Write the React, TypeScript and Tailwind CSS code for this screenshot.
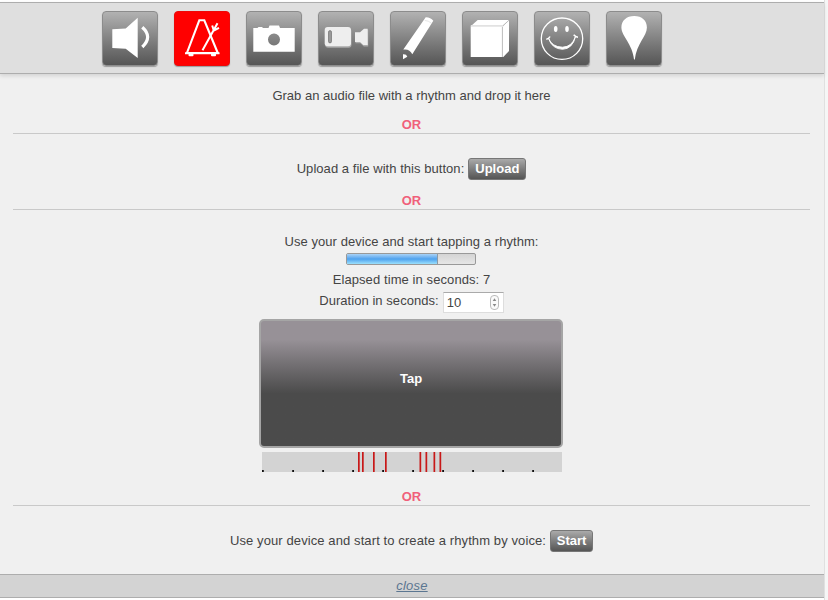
import type { ReactNode } from "react";

const TAPS = [96, 100, 111, 123, 157.5, 163.5, 171.5, 177.5];
const SECONDS = [0, 1, 2, 3, 4, 5, 6, 7, 8, 9];

function ToolButton({ label, active = false, children }: { label: string; active?: boolean; children: ReactNode }) {
  return (
    <button
      aria-label={label}
      className={
        "flex h-[55px] w-14 items-start rounded-[4px] border shadow-[0_1px_1px_rgba(0,0,0,0.3)] " +
        (active ? "border-[#ee0808] bg-[#ff0000]" : "border-[#8c8c8c] bg-linear-to-b from-[#b2b2b2] to-[#565656]")
      }
    >
      <svg viewBox="0 0 56 56" className="-ml-px -mt-px h-14 w-14 max-w-none shrink-0" fill="#fff" stroke="none">
        {children}
      </svg>
    </button>
  );
}

function Or() {
  return (
    <div className="h-[18px] border-b border-[#c9c9c9] text-center font-bold leading-[18px] text-[#f0607a]">OR</div>
  );
}

function SmallButton({ children, className }: { children: ReactNode; className: string }) {
  return (
    <button
      className={
        "h-[22px] rounded-[3px] border border-[#777] bg-linear-to-b from-[#aaa] to-[#555] text-center font-bold leading-[20px] text-white " +
        className
      }
    >
      {children}
    </button>
  );
}

export default function App() {
  return (
    <div className="flex h-[600px] w-[828px] overflow-hidden bg-[#f6f6f6] font-['Liberation_Sans',Arial,sans-serif] text-[13px] text-[#444]">
      <div className="flex w-[824px] flex-col bg-white pt-[2px]">
        <header className="z-10 flex h-[72px] gap-4 border-y border-[#adadad] bg-[#dfdfdf] pl-[102px] pt-2 shadow-[0_2px_4px_rgba(0,0,0,0.12)]">
          <ToolButton label="Sound">
            <path d="M10.3 18.3 23.7 17.5 35.7 6.7V47L23.7 37.8 10.3 37Z" />
            <path d="M40.3 16.3Q51 26 40.3 36" fill="none" stroke="#fff" strokeWidth="3.2" />
          </ToolButton>
          <ToolButton label="Rhythm" active>
            <path d="M12.9 42 25.3 9.3H30.3L43.8 42Z" fill="none" stroke="#fff" strokeWidth="2.1" />
            <path d="M28.5 39.3 43.5 12.3M38.2 14.5 39.8 19.5 45 16.8" fill="none" stroke="#fff" strokeWidth="2" />
            <path d="M11 41.2H45.5V43.2H11Z" />
            <rect x="14.5" y="42.5" width="5" height="2.8" rx="1" />
            <rect x="37" y="42.5" width="5" height="2.8" rx="1" />
          </ToolButton>
          <ToolButton label="Photo">
            <path
              fillRule="evenodd"
              d="M7.3 17H11.5L12.5 16H16L17 17H22.5L23.5 14.4H33L34 17H48.7V40.7H7.3ZM28 22.6A6 6 0 1 0 28 34.6 6 6 0 1 0 28 22.6Z"
            />
          </ToolButton>
          <ToolButton label="Video">
            <g fill="#aaa" transform="translate(0.5 1.3)">
              <rect x="6.7" y="16" width="26.3" height="19.4" rx="3" />
              <path d="M37 21.3H42L46 17.7H49.7V34.3H45.3L42 31H37Z" />
            </g>
            <g fill="#eee">
              <rect x="6.7" y="16" width="26.3" height="19.2" rx="3" />
              <path d="M37 21.3H42L46 17.7H49.7V34H45.3L42 31H37Z" />
            </g>
            <rect x="10.5" y="19.6" width="3" height="12.3" rx="1.5" fill="#999" stroke="#707070" strokeWidth="0.7" />
          </ToolButton>
          <ToolButton label="Draw">
            <path d="M35.7 6.2Q40.5 6 43.3 9.8L22.3 43.2Q19.5 37.5 13.3 38.6Z" />
            <path d="M34.8 9.5Q38.5 9.5 41.5 12.3" fill="none" stroke="#ccc" strokeWidth="0.5" />
            <path d="M13 43.3Q16.5 43 17.3 45.7L13 48.3Z" />
          </ToolButton>
          <ToolButton label="Object">
            <path d="M8.7 15.3 15.7 9H47V40L41.3 46H8.7Z" />
            <path d="M8.7 14H41L46.5 9.3 41 15.8H9Z" fill="#e2e2e2" />
            <path d="M40.4 15.8V46M41 14.8 47 9.2" fill="none" stroke="#bbb" strokeWidth="1" />
          </ToolButton>
          <ToolButton label="Smile">
            <circle cx="28" cy="27.7" r="20.7" fill="none" stroke="#fff" strokeWidth="1.3" />
            <ellipse cx="21.7" cy="18" rx="1.8" ry="2.9" />
            <ellipse cx="33" cy="18" rx="1.8" ry="2.9" />
            <path d="M14.5 27.3Q18 36 28.5 36.2 38 36 41.5 25.5 38.5 38 28.5 38.3 18 38 14.5 27.3Z" stroke="#fff" strokeWidth="0.9" />
            <path d="M12.3 28.2Q15 28 16 25.5M39.7 23.7Q41.5 26 44 26.2" fill="none" stroke="#fff" strokeWidth="1.5" />
          </ToolButton>
          <ToolButton label="Place">
            <path d="M28.2 5C36 5 40.9 9.5 40.9 16.5C40.9 25 30.5 33 28.8 48.4H28C26.5 33 15.4 25 15.4 16.5C15.4 9.5 20.5 5 28.2 5Z" />
          </ToolButton>
        </header>

        <main className="h-[500px] bg-[#f0f0f0] pl-[13px] pr-[14px] pt-3">
          <p className="text-center leading-5">Grab an audio file with a rhythm and drop it here</p>
          <div className="pt-[10px]">
            <Or />
          </div>
          <div className="mt-6 flex h-[22px] items-center justify-center gap-1">
            <span className="tracking-[0.045px]">Upload a file with this button:</span>
            <SmallButton className="w-[58px]">Upload</SmallButton>
          </div>
          <div className="pt-3">
            <Or />
          </div>
          <p className="mt-[22px] text-center leading-5 tracking-[0.06px]">Use your device and start tapping a rhythm:</p>
          <div className="ml-[333px] mt-px flex h-3 w-[130px] overflow-hidden rounded-[2px] border border-[#999] bg-linear-to-b from-[#d4d4d4] to-[#e6e6e6]">
            <div className="w-[91px] border-r border-[#8a9aa8] bg-linear-to-b from-[#a9d2f6] via-[#4ea2ee] to-[#9be0fc]" />
          </div>
          <p className="mt-[5px] text-center leading-5 tracking-[0.09px]">Elapsed time in seconds: 7</p>
          <div className="mt-[2px] flex h-[21px] justify-center gap-1">
            <span className="leading-[18px] tracking-[0.05px]">Duration in seconds:</span>
            <div className="flex h-[21px] w-[61px] items-center justify-between border border-[#ddd] border-t-[#aaa] bg-white pl-[3px] pr-1">
              <span>10</span>
              <svg viewBox="0 0 9 15" className="h-[15px] w-[9px]">
                <rect x="0.5" y="0.5" width="8" height="14" rx="3.5" fill="#fafafa" stroke="#bbb" />
                <path d="M4.5 3.3 6.3 6H2.7ZM4.5 11.7 6.3 9H2.7Z" fill="#888" />
              </svg>
            </div>
          </div>
          <button className="ml-[246px] mt-[6px] block h-[129px] w-[304px] rounded-[5px] border-2 border-[#a5a5a5] bg-linear-to-b from-[#979197] from-15% via-[#4b4b4b] via-58% to-[#4b4b4b] pb-[10px] font-bold text-white">
            Tap
          </button>
          <svg viewBox="0 0 300 20" className="ml-[249px] mt-1 block h-5 w-[300px] bg-[#d3d3d3]">
            {TAPS.map((x) => (
              <rect key={x} x={x} y="0" width="1.7" height="20" fill="#c81818" />
            ))}
            {SECONDS.map((s) => (
              <rect key={s} x={s === 0 ? 0 : s * 30 + 0.2} y="18" width="1.8" height="2" fill="#111" />
            ))}
          </svg>
          <div className="pt-4">
            <Or />
          </div>
          <div className="mt-6 flex h-[22px] items-center justify-center gap-1">
            <span className="tracking-[0.1px]">Use your device and start to create a rhythm by voice:</span>
            <SmallButton className="w-[43px]">Start</SmallButton>
          </div>
        </main>

        <footer className="h-6 border-y border-[#adadad] bg-[#d3d3d3] text-center leading-[22px]">
          <a href="#" className="italic tracking-[0.2px] text-[#5b7691] underline">
            close
          </a>
        </footer>
      </div>
      <div className="w-1 border-l border-[#e0e0e0]" />
    </div>
  );
}
